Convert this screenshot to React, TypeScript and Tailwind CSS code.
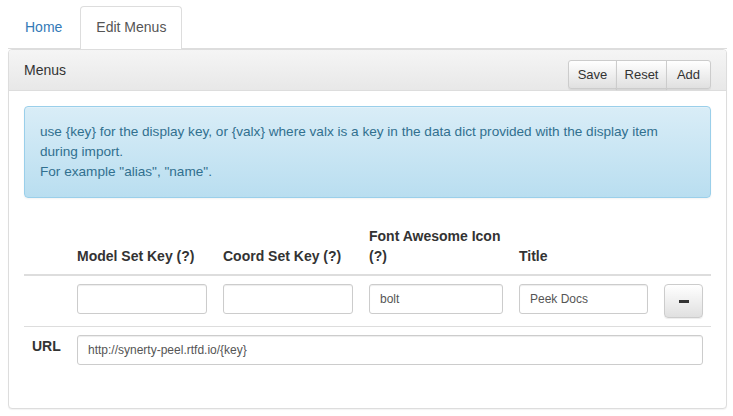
import React from "react";

const inputCls =
  "h-[30px] w-full rounded-[3px] border border-[#ccc] bg-white px-[10px] text-[12px] text-[#555] shadow-[inset_0_1px_1px_rgba(0,0,0,0.075)] outline-none";

const btnCls =
  "h-[29px] border border-[#ccc] bg-gradient-to-b from-white to-[#e0e0e0] text-center text-[13px] text-[#333] shadow-[inset_0_1px_0_rgba(255,255,255,0.15),0_1px_1px_rgba(0,0,0,0.075)]";

const App = () => {
  return (
    <div
      className="min-h-screen bg-white pl-[8px] pr-[6px] pt-[6px] text-[14px] leading-5 text-[#333]"
      style={{ fontFamily: '"Liberation Sans", Arial, sans-serif' }}
    >
      {/* tabs */}
      <div className="flex border-b border-[#ddd]">
        <a className="ml-px mr-[2px] border border-transparent px-[15px] py-[10px] text-[#337ab7]">Home</a>
        <div className="-mb-px rounded-t-[4px] border border-b-0 border-[#ddd] bg-white px-[15px] py-[10px] text-[#555]">
          Edit Menus
        </div>
      </div>

      {/* panel */}
      <div className="overflow-hidden rounded-[4px] border border-[#ddd] bg-white shadow-[0_1px_1px_rgba(0,0,0,0.05)]">
        <div className="flex h-[41px] items-start justify-between border-b border-[#ddd] bg-gradient-to-b from-[#f5f5f5] to-[#e8e8e8] px-[15px] pt-[10px]">
          <span className="leading-5">Menus</span>
          <div className="flex">
            <button className={`${btnCls} w-[49px] rounded-l-[3px]`}>Save</button>
            <button className={`${btnCls} -ml-px w-[51px]`}>Reset</button>
            <button className={`${btnCls} -ml-px w-[45px] rounded-r-[3px]`}>Add</button>
          </div>
        </div>

        <div className="px-[15px] pb-[15px] pt-[15px]">
          <div className="mb-[20px] rounded-[4px] border border-[#9acfea] bg-gradient-to-b from-[#d9edf7] to-[#b9def0] p-[15px] text-[13.6px] text-[#31708f] shadow-[inset_0_1px_0_rgba(255,255,255,0.25),0_1px_2px_rgba(0,0,0,0.05)]">
            <div className="whitespace-nowrap">
              use {"{key}"} for the display key, or {"{valx}"} where valx is a key in the data dict provided with the display item
            </div>
            <div>during import.</div>
            <div>For example "alias", "name".</div>
          </div>

          <div className="mb-[20px] grid grid-cols-[45px_146px_146px_150px_145px_55px]">
            {/* header */}
            <div className="border-b-2 border-[#ddd]" />
            <div className="flex items-end border-b-2 border-[#ddd] p-[8px] font-bold">Model Set Key (?)</div>
            <div className="flex items-end border-b-2 border-[#ddd] p-[8px] font-bold">Coord Set Key (?)</div>
            <div className="border-b-2 border-[#ddd] p-[8px] font-bold">
              Font Awesome Icon
              <br />
              (?)
            </div>
            <div className="flex items-end border-b-2 border-[#ddd] p-[8px] font-bold">Title</div>
            <div className="border-b-2 border-[#ddd]" />

            {/* row */}
            <div className="border-b border-[#ddd]" />
            <div className="border-b border-[#ddd] p-[8px]">
              <input className={inputCls} defaultValue="" />
            </div>
            <div className="border-b border-[#ddd] p-[8px]">
              <input className={inputCls} defaultValue="" />
            </div>
            <div className="border-b border-[#ddd] p-[8px]">
              <input className={inputCls} defaultValue="bolt" />
            </div>
            <div className="border-b border-[#ddd] p-[8px]">
              <input className={inputCls} defaultValue="Peek Docs" />
            </div>
            <div className="border-b border-[#ddd] p-[8px]">
              <button className="flex h-[34px] w-[39px] items-center justify-center rounded-[4px] border border-[#ccc] bg-gradient-to-b from-white to-[#e0e0e0] shadow-[0_1px_1px_rgba(0,0,0,0.075)]">
                <span className="block h-[3px] w-[10px] bg-[#333]" />
              </button>
            </div>

            {/* url row */}
            <div className="px-[8px] pt-[9px] font-bold">URL</div>
            <div className="col-span-5 p-[8px]">
              <input className={inputCls} defaultValue="http://synerty-peel.rtfd.io/{key}" />
            </div>
          </div>
        </div>
      </div>
    </div>
  );
};

export default App;
